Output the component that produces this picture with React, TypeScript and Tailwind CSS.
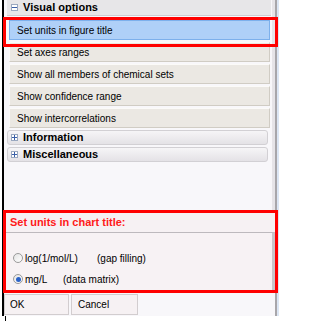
const Expander = ({ open }: { open?: boolean }) => (
  <span className="flex h-[7px] w-[7px] items-center justify-center border border-[#9aa8c0] bg-white">
    <svg width="5" height="5" viewBox="0 0 5 5">
      <rect x="0" y="2" width="5" height="1" fill="#3a5fa8" />
      {!open && <rect x="2" y="0" width="1" height="5" fill="#3a5fa8" />}
    </svg>
  </span>
);

const items = [
  "Set units in figure title",
  "Set axes ranges",
  "Show all members of chemical sets",
  "Show confidence range",
  "Show intercorrelations",
];

const Group = ({ label }: { label: string }) => (
  <div className="ml-[3px] mr-[4px] flex h-[15px] items-center gap-[5px] rounded-[3px] border border-[#d2d0d4] bg-gradient-to-b from-[#f6f5f7] to-[#e4e2e6] pl-[3px] text-[11px] font-bold">
    <Expander />
    <span>{label}</span>
  </div>
);

const Radio = ({ checked }: { checked?: boolean }) => (
  <span className="flex h-[10px] w-[10px] items-center justify-center rounded-full border border-[#9a9a9a] bg-gradient-to-br from-[#e4e4e4] to-white">
    {checked && <span className="h-[5px] w-[5px] rounded-full bg-[#2a62c8]" />}
  </span>
);

export default function App() {
  return (
    <div className="relative h-[321px] w-[315px] overflow-hidden bg-white font-['Liberation_Sans',Arial,sans-serif] text-[10px] text-black">
      <div className="ml-[2px] flex h-[316px] w-[277px] border-l-2 border-black">
        <div className="flex flex-1 flex-col bg-[#f8f7fa]">
          <div className="flex flex-1 flex-col border-r-[3px] border-[#e6e4e8]">
            <div className="ml-[3px] mr-[1px] flex h-[16px] items-center gap-[5px] border-b border-[#cfcdd1] bg-[#e7e6e8] pl-[4px] text-[11px] font-bold">
              <Expander open />
              <span>Visual options</span>
            </div>
            <div className="ml-[5px] mr-[2px] mt-[4px] flex flex-col gap-[2px]">
              {items.map((t, i) => (
                <div
                  key={t}
                  className={
                    i === 0
                      ? "flex h-[20px] items-center border border-[#7db0ec] bg-[#afd0f8] pl-[7px]"
                      : "flex h-[20px] items-center border border-[#fbfaf8] border-b-[#d0ccc4] border-r-[#d0ccc4] bg-[#ebe8e3] pl-[7px]"
                  }
                >
                  {t}
                </div>
              ))}
            </div>
            <div className="mt-[2px] flex flex-col gap-[2px]">
              <Group label="Information" />
              <Group label="Miscellaneous" />
            </div>
          </div>
          <div className="flex h-[22px] items-center bg-[#f6f1f3] pl-[6px] pt-[3px] text-[11px] font-bold text-[#ff1a1a]">
            Set units in chart title:
          </div>
          <div className="flex h-[59px] flex-col gap-[9px] border-t border-r-[3px] border-[#c9c5c9] border-t-[#bdb9bd] bg-[#f7f2f4] pl-[9px] pt-[19px]">
            <div className="flex h-[12px] items-center">
              <Radio />
              <span className="ml-[2px] w-[72px]">log(1/mol/L)</span>
              <span>(gap filling)</span>
            </div>
            <div className="flex h-[12px] items-center">
              <Radio checked />
              <span className="ml-[2px] w-[38px]">mg/L</span>
              <span>(data matrix)</span>
            </div>
          </div>
          <div className="flex h-[25px] items-end gap-[2px] bg-[#f8f7fa] pb-[1px]">
            <div className="flex h-[21px] w-[65px] items-center border border-[#d2cdcf] bg-[#f6f1f3] pl-[5px]">OK</div>
            <div className="flex h-[21px] w-[67px] items-center border border-[#d2cdcf] bg-[#f6f1f3] pl-[6px]">Cancel</div>
          </div>
        </div>
        <div className="w-[2px] bg-[#a8a6aa]" />
        <div className="w-[2px] bg-[#dce6f4]" />
      </div>
      <div className="absolute left-[3px] top-[17px] h-[30px] w-[275px] border-[3px] border-[#ff0000]" />
      <div className="absolute left-[3px] top-[210px] h-[83px] w-[275px] border-[3px] border-[#ff0000]" />
      <div className="absolute left-[5px] top-[316px] h-[5px] w-[1px] bg-black" />
    </div>
  );
}
